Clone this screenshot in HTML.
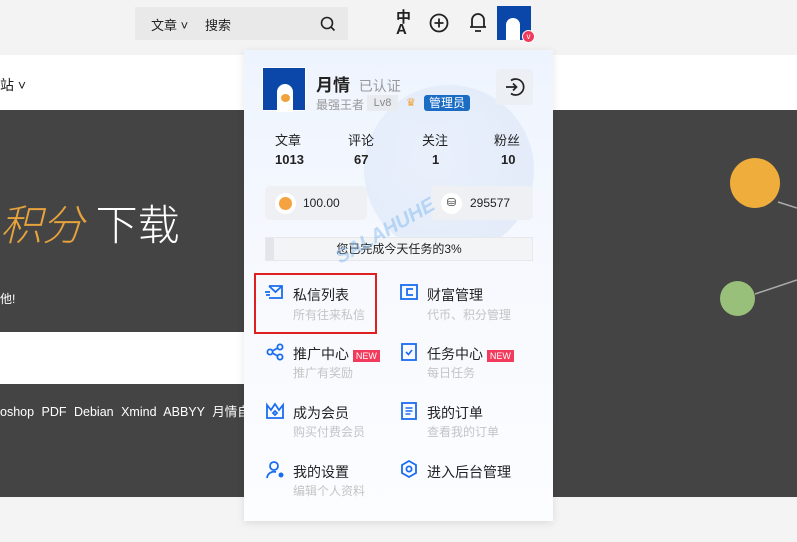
<!DOCTYPE html>
<html><head><meta charset="utf-8"><style>
*{margin:0;padding:0;box-sizing:border-box}
body{width:797px;height:542px;overflow:hidden;position:relative;background:#f4f4f4;font-family:"Liberation Sans","Noto Sans CJK SC",sans-serif;color:#222}
.abs{position:absolute}
.hdr{left:0;top:0;width:797px;height:55px;background:#f3f3f3}
.search{left:135px;top:7px;width:213px;height:33px;background:#e9e9e9;font-size:13px}
.white1{left:0;top:55px;width:797px;height:55px;background:#fff}
.dark{left:0;top:110px;width:797px;height:387px;background:#444}
.strip{left:0;top:332px;width:245px;height:52px;background:#fff}
.card{left:244px;top:50px;width:309px;height:471px;background:linear-gradient(180deg,#eef4fe 0%,#f7f9fe 50%,#fcfdff 100%);box-shadow:0 2px 8px rgba(0,0,0,.1);overflow:hidden}
.moon{left:120px;top:35px;width:170px;height:170px;border-radius:50%;background:radial-gradient(circle at 40% 40%,#e6eefb,#d9e4f7);opacity:.7}
.t{font-size:14px;color:#222}
.s{font-size:12px;color:#c4c4c4}
.new{background:#f23b5c;color:#fff;font-size:9px;padding:1px 3px;line-height:10px}
</style></head><body>
<div class="abs hdr"></div>
<div class="abs search"><span class="abs" style="left:16px;top:8px">文章 ˅</span><span class="abs" style="left:70px;top:8px">搜索</span>
<svg class="abs" style="left:185px;top:9px" width="16" height="16" viewBox="0 0 16 16"><circle cx="7" cy="7" r="5.5" fill="none" stroke="#222" stroke-width="1.6"/><path d="M11 11l3.5 3.5" stroke="#222" stroke-width="1.6"/></svg></div>
<div class="abs" style="left:396px;top:12px;font-size:15px;font-weight:bold;line-height:12px">中<br>A</div>
<svg class="abs" style="left:428px;top:12px" width="22" height="22"><circle cx="11" cy="11" r="8.5" fill="none" stroke="#222" stroke-width="1.8"/><path d="M11 6.5v9M6.5 11h9" stroke="#222" stroke-width="1.8"/></svg>
<svg class="abs" style="left:467px;top:10px" width="22" height="24"><path d="M5 17V10a6 6 0 0 1 12 0v7M3 17h16M8 21h6" fill="none" stroke="#222" stroke-width="1.8"/></svg>
<div class="abs" style="left:497px;top:6px;width:34px;height:34px;background:#0a47a8"><div class="abs" style="left:9px;top:12px;width:14px;height:22px;background:#fff;border-radius:7px 7px 0 0"></div></div>
<div class="abs" style="left:522px;top:30px;width:13px;height:13px;border-radius:50%;background:#f23b5c;border:1px solid #fff;color:#fff;font-size:8px;text-align:center;line-height:11px">v</div>
<div class="abs white1"></div>
<div class="abs" style="left:0;top:75px;font-size:14px">站 ˅</div>
<div class="abs dark"></div>
<div class="abs" style="left:0;top:192px;font-size:42px;color:#e6a23c;font-style:italic;font-weight:300">积分 <span style="color:#fff;font-style:normal">下载</span></div>
<div class="abs" style="left:0;top:290px;font-size:12px;color:#fff">他!</div>
<div class="abs strip"></div>
<div class="abs" style="left:0;top:401px;font-size:12.5px;color:#fff;word-spacing:4px;white-space:nowrap">oshop PDF Debian Xmind ABBYY 月情自</div>
<div class="abs" style="left:730px;top:158px;width:50px;height:50px;border-radius:50%;background:#efae3c"></div>
<svg class="abs" style="left:720px;top:180px" width="77" height="120"><path d="M58 22L77 28M35 114L77 100" stroke="#aaa" stroke-width="1.5"/></svg>
<div class="abs" style="left:720px;top:281px;width:35px;height:35px;border-radius:50%;background:#98c07a"></div>
<div class="abs card"><div class="abs moon"></div></div>
<div class="abs" style="left:262px;top:67px;width:44px;height:44px;background:#0a47a8;border:1px solid #fff"><div class="abs" style="left:14px;top:16px;width:16px;height:28px;background:#fff;border-radius:8px 8px 0 0"></div><div class="abs" style="left:18px;top:26px;width:9px;height:8px;background:#f0a33c;border-radius:50%"></div></div>
<div class="abs" style="left:316px;top:71px;font-size:17px;font-weight:bold">月情 <span style="font-size:14px;color:#999;font-weight:normal;margin-left:4px">已认证</span></div>
<div class="abs" style="left:316px;top:96px;font-size:12px;color:#999">最强王者</div>
<div class="abs" style="left:367px;top:95px;width:31px;height:16px;background:#e8ebf0;font-size:11px;color:#888;text-align:center;line-height:16px">Lv8</div>
<div class="abs" style="left:406px;top:96px;font-size:11px;color:#f0a33c">♛</div>
<div class="abs" style="left:424px;top:95px;width:46px;height:16px;background:#1a6cc4;color:#fff;font-size:12px;text-align:center;line-height:16px;border-radius:3px">管理员</div>
<div class="abs" style="left:496px;top:69px;width:37px;height:36px;background:#eceff4;border-radius:4px"></div>
<svg class="abs" style="left:503px;top:76px" width="22" height="22"><path d="M8 4.5A8 8 0 1 1 8 17.5" fill="none" stroke="#222" stroke-width="1.7"/><path d="M3 11h10M10 7.5l3.5 3.5-3.5 3.5" fill="none" stroke="#222" stroke-width="1.7"/></svg>
<div class="abs" style="left:262px;top:130px;width:290px;font-size:13px">
<span class="abs" style="left:13px">文章</span><span class="abs" style="left:86px">评论</span><span class="abs" style="left:160px">关注</span><span class="abs" style="left:232px">粉丝</span>
<b class="abs" style="left:13px;top:22px">1013</b><b class="abs" style="left:92px;top:22px">67</b><b class="abs" style="left:170px;top:22px">1</b><b class="abs" style="left:239px;top:22px">10</b></div>
<div class="abs" style="left:265px;top:186px;width:102px;height:34px;background:#eef0f4;border-radius:5px"><div class="abs" style="left:10px;top:7px;width:21px;height:21px;border-radius:50%;background:#fff"><div style="margin:4px;width:13px;height:13px;border-radius:50%;background:#f4a340"></div></div><span class="abs" style="left:38px;top:10px;font-size:12px">100.00</span></div>
<div class="abs" style="left:431px;top:186px;width:102px;height:34px;background:#eef0f4;border-radius:5px"><div class="abs" style="left:10px;top:7px;width:21px;height:21px;border-radius:50%;background:#fff;font-size:11px;text-align:center;line-height:21px">⛁</div><span class="abs" style="left:39px;top:10px;font-size:12px">295577</span></div>
<div class="abs" style="left:265px;top:237px;width:268px;height:24px;background:#f3f4f6;border:1px solid #e6e8ec;font-size:12px;text-align:center;line-height:22px"><div class="abs" style="left:0;top:0;width:8px;height:22px;background:#e3e5ea"></div>您已完成今天任务的3%</div>
<div class="abs" style="left:254px;top:273px;width:123px;height:61px;border:2px solid #e02020"></div>
<div class="abs" style="left:330px;top:220px;font-size:20px;font-weight:bold;font-style:italic;color:rgba(120,180,240,.45);transform:rotate(-30deg)">SALAHUHE</div>
<svg class="abs" style="left:264px;top:284px" width="20" height="16"><path d="M5 2h13v12H5M5 2l6.5 6L18 2M1 8h5M2 11h4" fill="none" stroke="#1a6cf0" stroke-width="1.8"/></svg>
<div class="abs t" style="left:293px;top:285px">私信列表</div><div class="abs s" style="left:293px;top:306px">所有往来私信</div>
<svg class="abs" style="left:400px;top:284px" width="18" height="16"><rect x="1" y="1" width="16" height="14" fill="none" stroke="#1a6cf0" stroke-width="1.8"/><path d="M13 5H7v6h6" fill="none" stroke="#1a6cf0" stroke-width="1.8"/></svg>
<div class="abs t" style="left:427px;top:285px">财富管理</div><div class="abs s" style="left:427px;top:306px">代币、积分管理</div>
<svg class="abs" style="left:266px;top:343px" width="18" height="18"><circle cx="4" cy="9" r="2.6" fill="none" stroke="#1a6cf0" stroke-width="1.8"/><circle cx="14" cy="4" r="2.6" fill="none" stroke="#1a6cf0" stroke-width="1.8"/><circle cx="14" cy="14" r="2.6" fill="none" stroke="#1a6cf0" stroke-width="1.8"/><path d="M6.3 8l5.4-3M6.3 10l5.4 3" stroke="#1a6cf0" stroke-width="1.8"/></svg>
<div class="abs t" style="left:293px;top:344px">推广中心 <span class="new">NEW</span></div><div class="abs s" style="left:293px;top:364px">推广有奖励</div>
<svg class="abs" style="left:401px;top:343px" width="16" height="18"><rect x="1" y="1" width="14" height="16" fill="none" stroke="#1a6cf0" stroke-width="1.8"/><path d="M5 9l2.5 2.5L11 7" fill="none" stroke="#1a6cf0" stroke-width="1.6"/></svg>
<div class="abs t" style="left:427px;top:344px">任务中心 <span class="new">NEW</span></div><div class="abs s" style="left:427px;top:364px">每日任务</div>
<svg class="abs" style="left:265px;top:402px" width="20" height="17"><path d="M2 3l4 5 4-6 4 6 4-5v13H2z M8 11l2-2 2 2-2 2z" fill="none" stroke="#1a6cf0" stroke-width="1.8"/></svg>
<div class="abs t" style="left:293px;top:403px">成为会员</div><div class="abs s" style="left:293px;top:423px">购买付费会员</div>
<svg class="abs" style="left:401px;top:402px" width="16" height="18"><rect x="1" y="1" width="14" height="16" fill="none" stroke="#1a6cf0" stroke-width="1.8"/><path d="M4.5 6h7M4.5 9h7M4.5 12h5" stroke="#1a6cf0" stroke-width="1.6"/></svg>
<div class="abs t" style="left:427px;top:403px">我的订单</div><div class="abs s" style="left:427px;top:423px">查看我的订单</div>
<svg class="abs" style="left:266px;top:460px" width="20" height="19"><circle cx="8" cy="6" r="4" fill="none" stroke="#1a6cf0" stroke-width="1.8"/><path d="M1 18a7 7 0 0 1 9-6" fill="none" stroke="#1a6cf0" stroke-width="1.8"/><circle cx="15" cy="15" r="2.5" fill="#1a6cf0"/></svg>
<div class="abs t" style="left:293px;top:462px">我的设置</div><div class="abs s" style="left:293px;top:482px">编辑个人资料</div>
<svg class="abs" style="left:400px;top:460px" width="18" height="18"><path d="M9 1l7 4v8l-7 4-7-4V5z" fill="none" stroke="#1a6cf0" stroke-width="1.8"/><circle cx="9" cy="9" r="2.6" fill="none" stroke="#1a6cf0" stroke-width="1.8"/></svg>
<div class="abs t" style="left:427px;top:462px">进入后台管理</div>
</body></html>
